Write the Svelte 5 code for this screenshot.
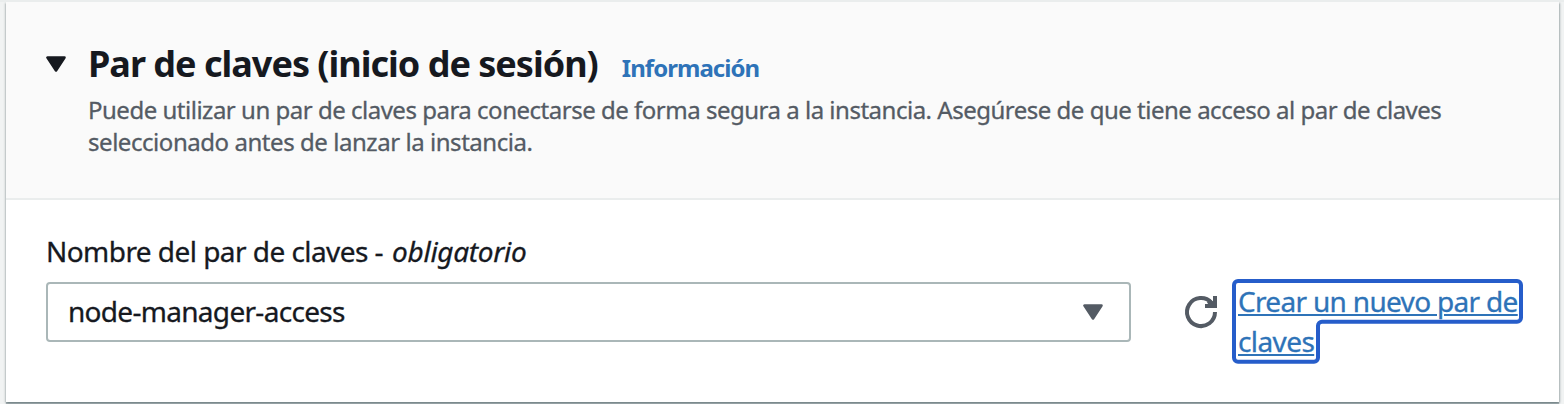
<script>
  const description = [
    'Puede utilizar un par de claves para conectarse de forma segura a la instancia. Asegúrese de que tiene acceso al par de claves',
    'seleccionado antes de lanzar la instancia.'
  ];
  const keyPair = 'node-manager-access';
</script>

<div class="page">
  <section class="card">
    <header>
      <svg class="toggle" width="20" height="16" viewBox="0 0 20 16" aria-hidden="true">
        <path d="M1.5 1.5h17L10 14.5z" fill="#16191f" stroke="#16191f" stroke-width="2.6" stroke-linejoin="round" />
      </svg>
      <div class="heading">
        <div class="title-row">
          <h2>Par de claves (inicio de sesión)</h2>
          <a class="info" href="#info">Información</a>
        </div>
        <p>{#each description as line}<span>{line}</span>{/each}</p>
      </div>
    </header>
    <div class="body">
      <div class="field">
        <div class="label"><span>Nombre del par de claves -</span><em>obligatorio</em></div>
        <div class="select">
          <span>{keyPair}</span>
          <svg width="20" height="16" viewBox="0 0 20 16" aria-hidden="true">
            <path d="M1.5 1.5h17L10 14.5z" fill="#545b64" stroke="#545b64" stroke-width="2.6" stroke-linejoin="round" />
          </svg>
        </div>
      </div>
      <svg class="refresh" width="32" height="32" viewBox="0 0 32 32" fill="none" stroke="#545b64" stroke-width="4" aria-hidden="true">
        <path d="M30 16a14 14 0 1 1-3.500-9.200l2.500 2.700" />
        <path d="M30 0v10H20" />
        <path d="M25 3.200l3.500 2.800v3h-4.500l-2-2.500z" fill="#545b64" stroke="none" />
      </svg>
      <a class="create" href="#create">
        <span class="l1">Crear un nuevo par de</span>
        <span class="l2">claves</span>
        <svg class="ring" width="291" height="85" viewBox="0 0 291 85" fill="none" aria-hidden="true">
          <path d="M6 2H285a4 4 0 0 1 4 4V38.700a4 4 0 0 1-4 4H90a4 4 0 0 0-4 4V78.700a4 4 0 0 1-4 4H6a4 4 0 0 1-4-4V6a4 4 0 0 1 4-4z" stroke="#265dca" stroke-width="4" />
        </svg>
      </a>
    </div>
  </section>
</div>

<style>
  :global(body) { background: #f1f3f3; }
  .page {
    box-sizing: border-box;
    height: 404px;
    padding: 2px 5px 2px 6px;
    overflow: hidden;
    background: linear-gradient(#eaeded 0 2px, #f1f3f3 2px);
    font-family: "Noto Sans", sans-serif;
    color: #16191f;
    white-space: nowrap;
  }
  .card {
    height: 400px;
    background: #fff;
    box-shadow: 0 2px 1px rgba(0, 28, 36, .28), 1px 1px 2px rgba(0, 28, 36, .28), -1px 1px 2px rgba(0, 28, 36, .18);
    clip-path: inset(0 -5px -4px -6px);
  }
  header {
    box-sizing: border-box;
    display: flex;
    gap: 22px;
    height: 198px;
    padding: 37px 40px 0;
    background: #fafafa;
    border-bottom: 2px solid #eaeded;
  }
  .toggle { margin-top: 17px; flex: none; }
  .title-row { display: flex; align-items: baseline; gap: 24px; height: 55px; line-height: 50px; }
  h2 { margin: 0; font-size: 36px; line-height: 50px; font-weight: 700; letter-spacing: -1px; }
  .info { font-size: 24px; font-weight: 700; letter-spacing: -.95px; color: #2e73b8; text-decoration: none; }
  p { margin: 0; font-size: 24px; line-height: 32px; letter-spacing: -.49px; color: #545b64; -webkit-text-stroke: .3px; }
  p span { display: block; width: max-content; }
  p span + span { letter-spacing: -.45px; }
  .body { display: flex; padding: 31px 36px 0 40px; }
  .field { width: 1085px; flex: none; }
  .label { display: flex; gap: 9px; font-size: 28px; line-height: 40px; height: 51px; letter-spacing: -.55px; -webkit-text-stroke: .3px; }
  .label em { letter-spacing: -.3px; }
  .select {
    box-sizing: border-box;
    display: flex;
    align-items: center;
    justify-content: space-between;
    height: 60px;
    padding: 0 26px 0 20px;
    border: 2px solid #aab7b8;
    border-radius: 4px;
    font-size: 28px;
    letter-spacing: -.7px;
    -webkit-text-stroke: .3px;
  }
  .select span { padding-bottom: 2px; }
  .refresh { margin: 65px 0 0 54px; flex: none; overflow: visible; }
  .create {
    position: relative;
    margin: 50px 0 0 21px;
    font-size: 28px;
    line-height: 40px;
    letter-spacing: -.68px;
    color: #2e73b8;
    text-decoration: underline;
    text-decoration-thickness: 2px;
    text-underline-offset: 2px;
    -webkit-text-stroke: .3px;
  }
  .create span { display: block; width: max-content; }
  .create .l2 { letter-spacing: -.6px; }
  .ring { position: absolute; left: -6px; top: -2px; }
</style>
